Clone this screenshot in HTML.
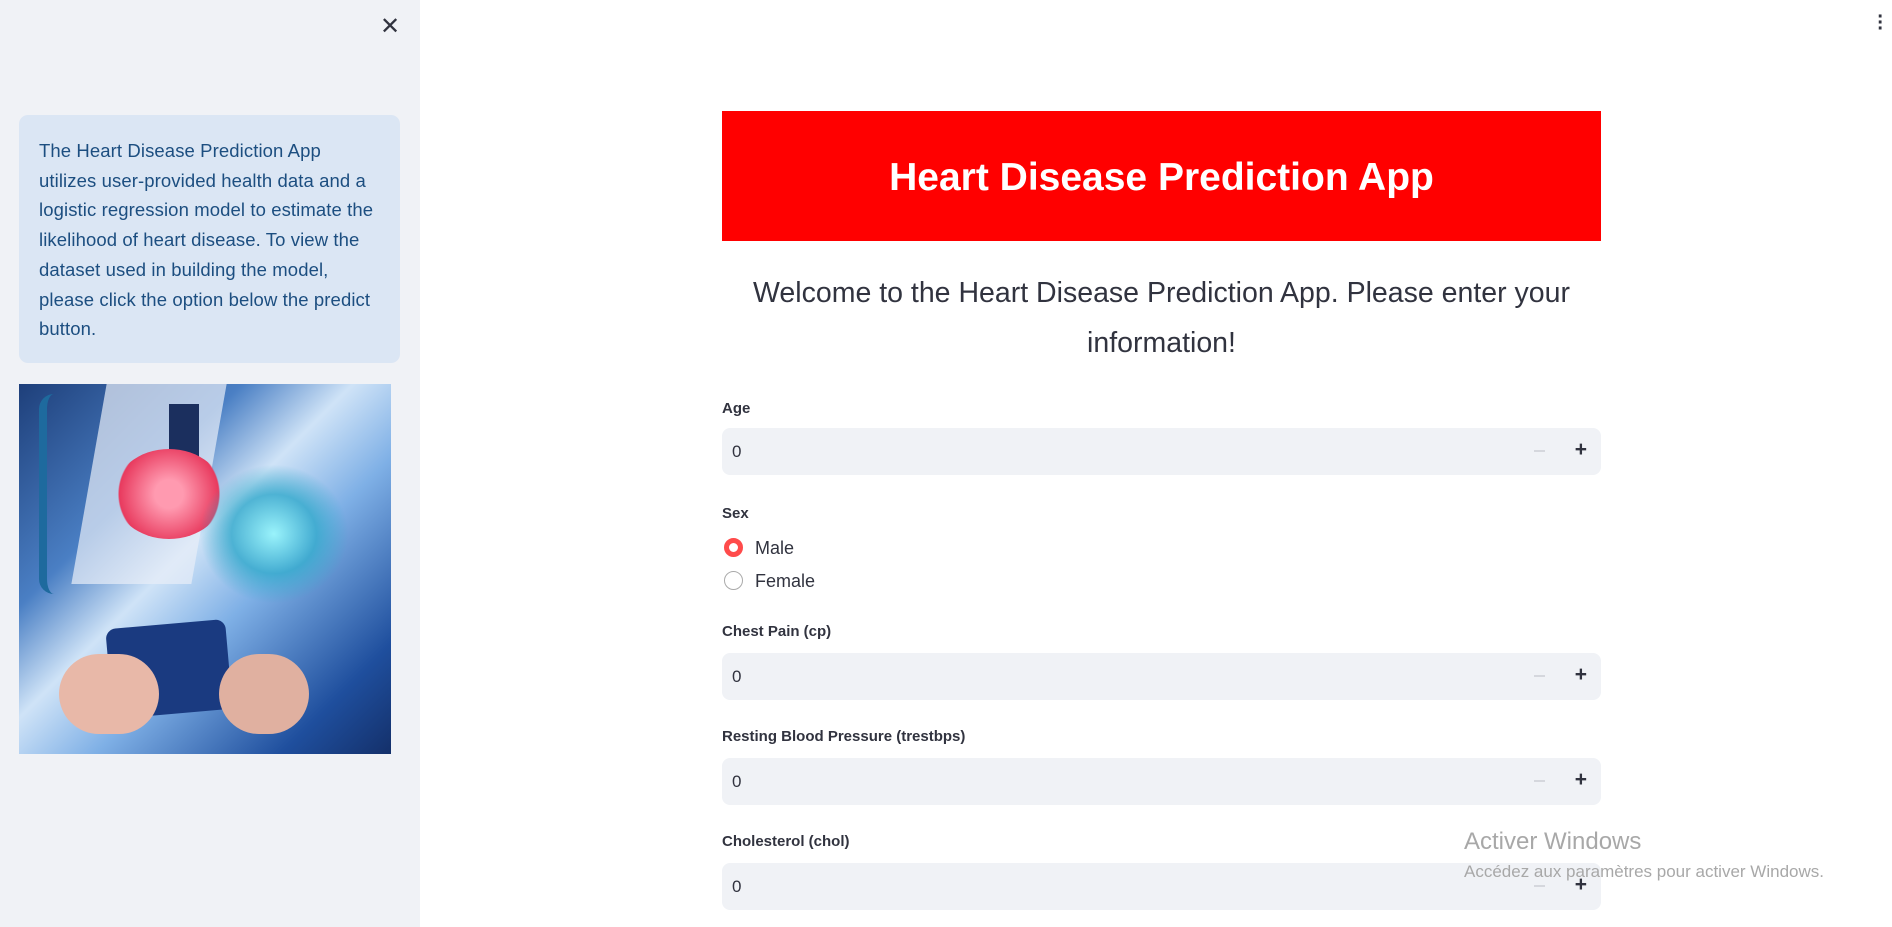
<!DOCTYPE html>
<html><head><meta charset="utf-8"><style>
*{margin:0;padding:0;box-sizing:border-box}
body{width:1892px;height:927px;overflow:hidden;background:#fff;font-family:"Source Sans Pro","Liberation Sans",sans-serif;color:#31333f;position:relative}
.sb{position:absolute;left:0;top:0;width:420px;height:927px;background:#f0f2f6}
.x{position:absolute;left:380px;top:12px;font-size:24px;color:#31333f}
.info{position:absolute;left:19px;top:115px;width:381px;height:248px;background:#dbe6f4;border-radius:9px;padding:21px 20px;color:#1c4e80;font-size:18.5px;line-height:29.7px;letter-spacing:0.1px;white-space:nowrap}
.img{position:absolute;left:19px;top:384px;width:372px;height:370px;overflow:hidden;background:linear-gradient(135deg,#1e3f7a 0%,#4a7fc4 30%,#cfe3f7 45%,#7fb0e6 60%,#1f4f9e 85%,#14306a 100%)}
.lbl{position:absolute;left:722px;font-size:15px;font-weight:bold;color:#31333f}
.inp{position:absolute;left:722px;width:879px;height:47px;background:#f0f2f6;border-radius:8px;font-size:17px;padding:14px 10px}
.inp .m{position:absolute;right:56px;top:22px;width:11px;height:2px;background:#d5d7dd}
.inp .p{position:absolute;right:14px;top:10px;font-size:21px;font-weight:bold}
.r{position:absolute;left:724px;font-size:18px}
.r i{display:inline-block;width:19px;height:19px;border-radius:50%;vertical-align:-3px;margin-right:12px}
</style></head><body>
<div class="sb">
<div class="x">✕</div>
<div class="info">The Heart Disease Prediction App<br>utilizes user-provided health data and a<br>logistic regression model to estimate the<br>likelihood of heart disease. To view the<br>dataset used in building the model,<br>please click the option below the predict<br>button.</div>
<div class="img">
<div style="position:absolute;left:70px;top:0;width:120px;height:200px;background:#e8eef8;transform:skewX(-10deg);opacity:.7"></div>
<div style="position:absolute;left:150px;top:20px;width:30px;height:110px;background:#1b2f5e"></div>
<div style="position:absolute;left:20px;top:10px;width:30px;height:200px;border-left:8px solid #1e6a9e;border-radius:40px"></div>
<div style="position:absolute;left:95px;top:65px;width:110px;height:90px;background:radial-gradient(circle,#ff9ab0 20%,#e83a5e 70%,transparent 72%);border-radius:50%"></div>
<div style="position:absolute;left:180px;top:80px;width:150px;height:140px;background:radial-gradient(ellipse,#9ff 0%,#3ac 40%,transparent 70%);opacity:.8"></div>
<div style="position:absolute;left:90px;top:240px;width:120px;height:90px;background:#1a3a80;border-radius:10px;transform:rotate(-5deg)"></div>
<div style="position:absolute;left:40px;top:270px;width:100px;height:80px;background:#e8b8a8;border-radius:40px"></div>
<div style="position:absolute;left:200px;top:270px;width:90px;height:80px;background:#e0b0a0;border-radius:40px"></div>
</div>
</div>
<div style="position:absolute;right:8px;top:14px;font-size:20px;line-height:6px;font-weight:bold;color:#31333f">·<br>·<br>·</div>
<div style="position:absolute;left:722px;top:111px;width:879px;height:130px;background:#ff0000;color:#fff;font-size:39px;font-weight:bold;text-align:center;line-height:134px">Heart Disease Prediction App</div>
<div style="position:absolute;left:722px;top:268px;width:879px;text-align:center;font-size:28.5px;line-height:50px;color:#31333f">Welcome to the Heart Disease Prediction App. Please enter your information!</div>
<div class="lbl" style="top:400px">Age</div>
<div class="inp" style="top:428px">0<span class="m"></span><span class="p">+</span></div>
<div class="lbl" style="top:505px">Sex</div>
<div class="r" style="top:538px"><i style="border:5.5px solid #ff4b4b;background:#fff"></i>Male</div>
<div class="r" style="top:571px"><i style="border:1.5px solid #aaa"></i>Female</div>
<div class="lbl" style="top:623px">Chest Pain (cp)</div>
<div class="inp" style="top:653px">0<span class="m"></span><span class="p">+</span></div>
<div class="lbl" style="top:728px">Resting Blood Pressure (trestbps)</div>
<div class="inp" style="top:758px">0<span class="m"></span><span class="p">+</span></div>
<div class="lbl" style="top:833px">Cholesterol (chol)</div>
<div class="inp" style="top:863px">0<span class="m"></span><span class="p">+</span></div>
<div style="position:absolute;left:1464px;top:828px;font-size:24px;color:#a8a8a8">Activer Windows</div>
<div style="position:absolute;left:1464px;top:862px;font-size:17px;color:#a8a8a8">Accédez aux paramètres pour activer Windows.</div>
</body></html>
